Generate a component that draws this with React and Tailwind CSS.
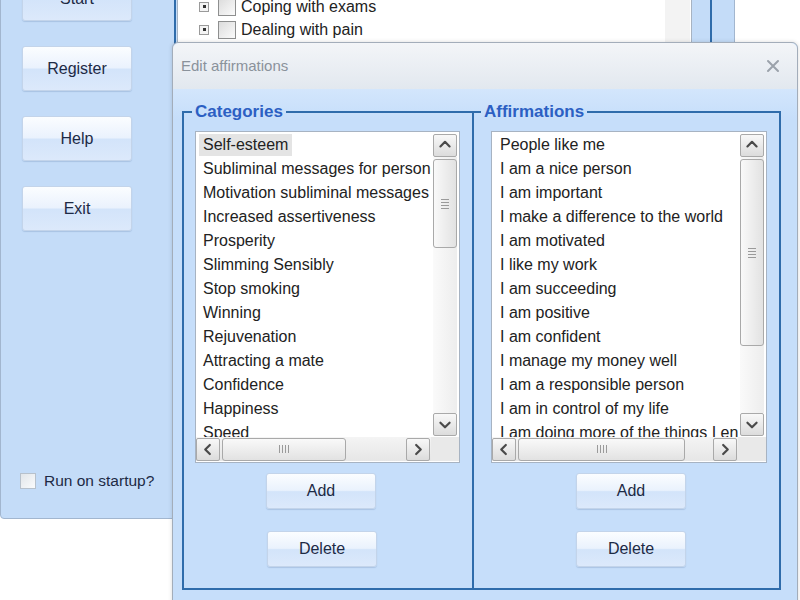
import React from 'react';

const FONT = "font-['Liberation_Sans',Arial,sans-serif]";

const categories = [
  'Self-esteem',
  'Subliminal messages for personal growth',
  'Motivation subliminal messages',
  'Increased assertiveness',
  'Prosperity',
  'Slimming Sensibly',
  'Stop smoking',
  'Winning',
  'Rejuvenation',
  'Attracting a mate',
  'Confidence',
  'Happiness',
  'Speed',
];

const affirmations = [
  'People like me',
  'I am a nice person',
  'I am important',
  'I make a difference to the world',
  'I am motivated',
  'I like my work',
  'I am succeeding',
  'I am positive',
  'I am confident',
  'I manage my money well',
  'I am a responsible person',
  'I am in control of my life',
  'I am doing more of the things I enjoy',
];

function WinButton({ children, className = '' }) {
  return (
    <button
      className={`flex items-center justify-center rounded-[3px] border border-[#c3d4ea] bg-[linear-gradient(to_bottom,#fbfdff_0%,#eaf2fd_48%,#d3e4fa_52%,#dce9fb_100%)] text-[16px] text-[#1d2a45] shadow-[0_1px_1px_rgba(120,150,190,0.35)] ${className}`}
    >
      {children}
    </button>
  );
}

function Arrow({ dir }) {
  const pts = {
    up: '7,13 12,8 17,13',
    down: '7,10 12,15 17,10',
    left: '14,7 9,12 14,17',
    right: '10,7 15,12 10,17',
  }[dir];
  return (
    <svg width="24" height="23" viewBox="0 0 24 24">
      <polyline points={pts} fill="none" stroke="#4a4a4a" strokeWidth="2.4" strokeLinecap="round" strokeLinejoin="round" />
    </svg>
  );
}

function ScrollBtn({ dir, className = '' }) {
  return (
    <div className={`flex h-[23px] w-[24px] shrink-0 items-center justify-center rounded-[2px] border border-[#a9a9a9] bg-[linear-gradient(to_bottom,#f8f8f8,#dcdcdc)] ${className}`}>
      <Arrow dir={dir} />
    </div>
  );
}

function VScroll({ thumb }) {
  return (
    <div className="flex h-full w-[28px] flex-col px-[2px] pt-[2px] pb-[1px]">
      <ScrollBtn dir="up" />
      <div className="flex flex-1 flex-col bg-[linear-gradient(to_right,#fafafa,#ededed)] pt-[2px]">
        <div
          className="flex w-[24px] items-center justify-center rounded-[3px] border border-[#a9a9a9] bg-[linear-gradient(to_right,#f9f9f9,#e2e2e2)]"
          style={{ height: thumb }}
        >
          <div className="flex flex-col gap-[2px]">
            <div className="h-px w-[8px] bg-[#9a9a9a]" />
            <div className="h-px w-[8px] bg-[#9a9a9a]" />
            <div className="h-px w-[8px] bg-[#9a9a9a]" />
            <div className="h-px w-[8px] bg-[#9a9a9a]" />
          </div>
        </div>
      </div>
      <ScrollBtn dir="down" />
    </div>
  );
}

function HScroll({ thumb }) {
  return (
    <div className="flex h-[24px] shrink-0">
      <div className="flex flex-1 items-center bg-[linear-gradient(to_bottom,#f4f4f4,#e6e6e6)]">
        <ScrollBtn dir="left" />
        <div
          className="ml-[2px] flex h-[23px] items-center justify-center rounded-[3px] border border-[#a9a9a9] bg-[linear-gradient(to_bottom,#f9f9f9,#e2e2e2)]"
          style={{ width: thumb }}
        >
          <div className="flex gap-[2px]">
            <div className="h-[8px] w-px bg-[#9a9a9a]" />
            <div className="h-[8px] w-px bg-[#9a9a9a]" />
            <div className="h-[8px] w-px bg-[#9a9a9a]" />
            <div className="h-[8px] w-px bg-[#9a9a9a]" />
          </div>
        </div>
        <div className="flex-1" />
        <ScrollBtn dir="right" className="mr-[1px]" />
      </div>
      <div className="w-[28px] bg-[#e9e9e9]" />
    </div>
  );
}

function ListBox({ items, width, vthumb, hthumb, pad, selected }) {
  return (
    <div
      className="flex h-[332px] flex-col border border-[#a7b3c2] bg-white"
      style={{ width }}
    >
      <div className="flex h-[305px] shrink-0">
        <div className="flex-1 overflow-hidden pt-px" style={{ paddingLeft: pad }}>
          {items.map((t, i) => (
            <div key={t} className="flex h-[24px] items-center whitespace-nowrap text-[16px] text-[#222]">
              <span className={`px-[4px] leading-[22px] ${selected && i === 0 ? 'bg-[#e4e4e4]' : ''}`}>{t}</span>
            </div>
          ))}
        </div>
        <VScroll thumb={vthumb} />
      </div>
      <HScroll thumb={hthumb} />
    </div>
  );
}

function TreeRow({ label }) {
  return (
    <div className="flex h-[23px] items-center">
      <div className="ml-[21px] flex h-[10px] w-[10px] items-center justify-center border border-[#9a9a9a] bg-[#f4f4f4]">
        <div className="h-[3px] w-[3px] bg-[#333]" />
      </div>
      <div className="ml-[9px] h-[18px] w-[18px] border border-[#8e8f8f] bg-[linear-gradient(135deg,#dcdcdc,#fbfbfb)]" />
      <span className="ml-[5px] text-[16px] text-[#222]">{label}</span>
    </div>
  );
}

export default function App() {
  return (
    <div className={`relative h-[600px] w-[800px] overflow-hidden bg-white ${FONT}`}>
      {/* main window behind */}
      <div className="absolute left-0 top-[-30px] flex h-[549px] w-[735px] rounded-b-[4px] border border-[#a2b6cf] bg-[#c4dcf8]">
        <div className="flex w-[171px] flex-col pt-[5px]">
          <div className="flex flex-col gap-[25px] pl-[21px]">
            <WinButton className="h-[45px] w-[110px]">Start</WinButton>
            <WinButton className="h-[45px] w-[110px]">Register</WinButton>
            <WinButton className="h-[45px] w-[110px]">Help</WinButton>
            <WinButton className="h-[45px] w-[110px]">Exit</WinButton>
          </div>
          <div className="mt-[238px] flex items-center pl-[19px]">
            <div className="h-[16px] w-[16px] border border-[#b7c1cc] bg-[linear-gradient(135deg,#e2e6ea,#fafbfc)]" />
            <span className="ml-[8px] text-[15.5px] text-[#1d2a45]">Run on startup?</span>
          </div>
        </div>
        <div className="flex flex-1 pl-[2px] pr-[22px]">
          <div className="flex h-[80px] w-[538px] border-x-2 border-[#2f6cab] pl-[1px] pr-[18px]">
            <div className="flex flex-1 border border-[#a7b3c2] bg-white">
              <div className="flex flex-1 flex-col pt-[23px]">
                <TreeRow label="Coping with exams" />
                <TreeRow label="Dealing with pain" />
              </div>
              <div className="flex w-[26px] flex-col pt-[2px] pr-[1px]">
                <ScrollBtn dir="up" />
                <div className="flex-1 bg-[#f3f3f3]" />
              </div>
            </div>
          </div>
        </div>
      </div>

      {/* Edit affirmations dialog */}
      <div className="absolute left-[172px] top-[42px] flex h-[580px] w-[626px] flex-col rounded-t-[6px] border border-[#a3adba] bg-[#c6defa] shadow-[0_0_4px_rgba(0,0,0,0.15)]">
        <div className="flex h-[46px] shrink-0 items-center justify-between rounded-t-[6px] bg-[linear-gradient(to_bottom,#f3f5f8,#e2e8ef)] pl-[8px] pr-[17px]">
          <span className="text-[15px] text-[#8a929b]">Edit affirmations</span>
          <svg width="14" height="14" viewBox="0 0 14 14">
            <path d="M2 2 L12 12 M12 2 L2 12" stroke="#9ba2ab" strokeWidth="2" strokeLinecap="round" />
          </svg>
        </div>
        <div className="flex bg-[linear-gradient(to_bottom,#d3e6fc,#c6defa_30px)] pl-[9px] pt-[12px]">
          <fieldset className="w-[290px] border-y-2 border-l-2 border-[#2f6cab] pb-[21px]">
            <legend className="ml-[8px] px-[3px] text-[17px] font-bold leading-[22px] text-[#2c5fc3]">Categories</legend>
            <div className="ml-[11px] mt-[8px]">
              <ListBox items={categories} width={265} vthumb={89} hthumb={124} pad={3} selected />
            </div>
            <WinButton className="ml-[82px] mt-[10px] h-[36px] w-[110px]">Add</WinButton>
            <WinButton className="ml-[83px] mt-[22px] h-[36px] w-[110px]">Delete</WinButton>
          </fieldset>
          <fieldset className="w-[309px] border-2 border-[#2f6cab] pb-[21px]">
            <legend className="ml-[7px] px-[3px] text-[17px] font-bold leading-[22px] text-[#2c5fc3]">Affirmations</legend>
            <div className="ml-[17px] mt-[8px]">
              <ListBox items={affirmations} width={276} vthumb={187} hthumb={167} pad={4} />
            </div>
            <WinButton className="ml-[102px] mt-[10px] h-[36px] w-[110px]">Add</WinButton>
            <WinButton className="ml-[102px] mt-[22px] h-[36px] w-[110px]">Delete</WinButton>
          </fieldset>
        </div>
      </div>
    </div>
  );
}
